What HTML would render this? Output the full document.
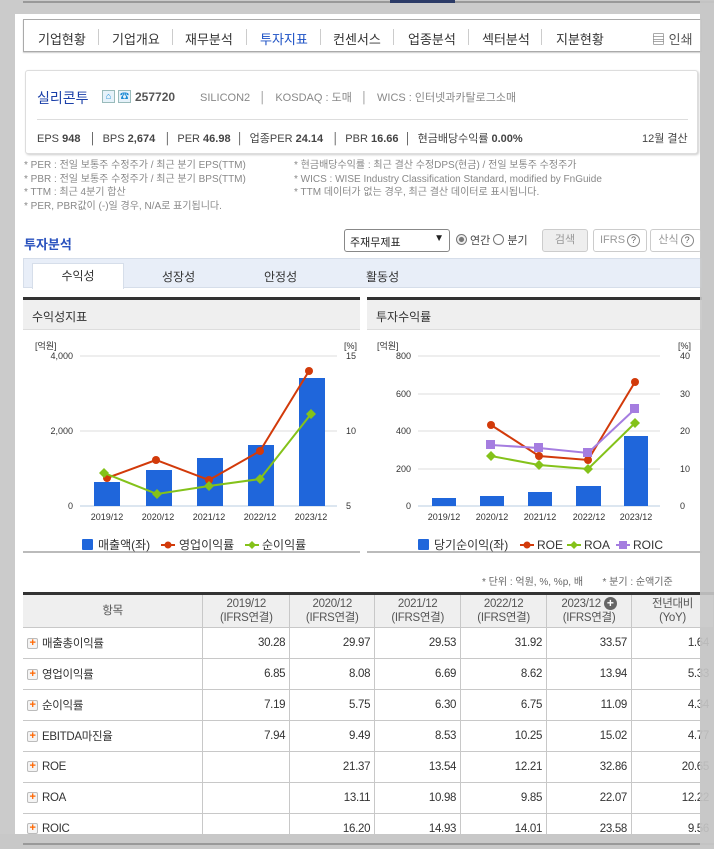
<!DOCTYPE html>
<html><head><meta charset="utf-8"><style>
*{margin:0;padding:0;box-sizing:border-box}
body{width:714px;height:849px;background:#cbcbcb;position:relative;overflow:hidden;font-family:"Liberation Sans","Noto Sans CJK KR",sans-serif;color:#333;font-size:12px}
.a{position:absolute}
.page{left:15px;top:14px;width:685px;height:820px;background:#fff}
.nav{left:23px;top:19px;width:679px;height:33px;border:1px solid #aaa;box-shadow:0 1px 1px #ccc;background:#fff}
.nav span{position:absolute;top:9px;font-size:13px;color:#333}
.nav i{position:absolute;top:9px;width:1px;height:16px;background:#ccc}
.info{left:25px;top:70px;width:673px;height:84px;border:1px solid #ddd;border-radius:3px;box-shadow:1px 1px 2px #ccc;background:#fff}
.note{font-size:10px;color:#888;line-height:13.5px}
.hd{background:#efefef;border-top:3px solid #333;border-bottom:1px solid #ddd;height:33px;font-size:12px;color:#333;padding:8px 9px}
table{border-collapse:collapse;position:absolute;left:23px;top:592px;width:691px;font-size:11.5px;letter-spacing:-0.3px}
td,th{border:1px solid #c8c8c8;height:31px;text-align:right;padding-right:4px;font-weight:normal}
thead th{background:#efefef;text-align:center;height:34px;color:#555;line-height:14px;padding:0}
tr td:first-child{text-align:left;padding-left:4px;border-left:none}
thead th:first-child{border-left:none}
table{border-top:3px solid #333}
.pl{display:inline-block;width:11px;height:11px;border:1px solid #bbb;border-radius:2px;background:#f4f4f4;color:#f60;font-size:11px;line-height:8px;text-align:center;font-weight:bold;vertical-align:middle;margin-right:4px}
.btn{position:absolute;top:229px;height:23px;border:1px solid #ccc;border-radius:3px;font-size:11px;color:#999;text-align:center;line-height:21px;background:#fff}
.q{display:inline-block;width:13px;height:13px;border:1px solid #888;border-radius:50%;font-size:9px;line-height:11px;color:#555;margin-left:2px}
</style></head><body>
<div class="a" style="left:23px;top:1px;width:691px;height:2px;background:#999"></div>
<div class="a" style="left:390px;top:0;width:65px;height:3px;background:#2b3a66"></div>
<div class="a page"></div>
<div class="a nav">
<span style="left:14px">기업현황</span><i style="left:74px"></i>
<span style="left:88px">기업개요</span><i style="left:148px"></i>
<span style="left:161px">재무분석</span><i style="left:222px"></i>
<span style="left:236px;color:#1a4fc4">투자지표</span><i style="left:296px"></i>
<span style="left:309px">컨센서스</span><i style="left:369px"></i>
<span style="left:384px">업종분석</span><i style="left:444px"></i>
<span style="left:458px">섹터분석</span><i style="left:517px"></i>
<span style="left:532px">지분현황</span>
<span style="left:628px;color:#555">▤ 인쇄</span>
</div>
<div class="a info">
<div class="a" style="left:11px;top:17px;font-size:14px;color:#1a3fa8">실리콘투</div>
<div class="a" style="left:76px;top:19px;width:13px;height:13px;border:1px solid #9bb;background:#e6f2fa;color:#1a8ad4;font-size:9px;text-align:center;line-height:11px">⌂</div>
<div class="a" style="left:92px;top:19px;width:13px;height:13px;border:1px solid #9bb;background:#e6f2fa;color:#1a8ad4;font-size:9px;text-align:center;line-height:11px">☎</div>
<div class="a" style="left:109px;top:19px;font-size:12px;font-weight:bold;color:#555">257720</div>
<div class="a" style="left:174px;top:18px;font-size:11px;color:#888">SILICON2 &nbsp;&nbsp;│&nbsp;&nbsp; KOSDAQ : 도매 &nbsp;&nbsp;│&nbsp;&nbsp; WICS : 인터넷과카탈로그소매</div>
<div class="a" style="left:11px;top:48px;width:651px;height:1px;background:#ddd"></div>
<div class="a" style="left:11px;top:59px;font-size:11px;color:#444;white-space:nowrap">EPS <b>948</b> &nbsp;&nbsp;│&nbsp; BPS <b>2,674</b> &nbsp;&nbsp;│&nbsp; PER <b>46.98</b> &nbsp;│&nbsp; 업종PER <b>24.14</b> &nbsp;&nbsp;│&nbsp; PBR <b>16.66</b> &nbsp;│&nbsp; 현금배당수익률 <b>0.00%</b></div>
<div class="a" style="left:616px;top:59px;font-size:11px;color:#444">12월 결산</div>
</div>
<div class="a note" style="left:24px;top:159px">* PER : 전일 보통주 수정주가 / 최근 분기 EPS(TTM)<br>* PBR : 전일 보통주 수정주가 / 최근 분기 BPS(TTM)<br>* TTM : 최근 4분기 합산<br>* PER, PBR값이 (-)일 경우, N/A로 표기됩니다.</div>
<div class="a note" style="left:294px;top:159px">* 현금배당수익률 : 최근 결산 수정DPS(현금) / 전일 보통주 수정주가<br>* WICS : WISE Industry Classification Standard, modified by FnGuide<br>* TTM 데이터가 없는 경우, 최근 결산 데이터로 표시됩니다.</div>
<div class="a" style="left:24px;top:234px;font-size:13px;font-weight:bold;color:#2a52be">투자분석</div>
<div class="a" style="left:344px;top:229px;width:106px;height:23px;border:1px solid #888;border-radius:3px;font-size:11px;padding:4px 5px;color:#222">주재무제표<span style="position:absolute;right:5px;top:3px;font-size:10px">▼</span></div>
<div class="a" style="left:456px;top:232px;font-size:11px;color:#444"><span style="display:inline-block;width:11px;height:11px;border:1px solid #777;border-radius:50%;background:radial-gradient(#777 35%,#eee 45%);vertical-align:-1px"></span> 연간 <span style="display:inline-block;width:11px;height:11px;border:1px solid #777;border-radius:50%;vertical-align:-1px"></span> 분기</div>
<div class="btn" style="left:542px;width:46px;background:#eee">검색</div>
<div class="btn" style="left:593px;width:54px">IFRS<span class="q">?</span></div>
<div class="btn" style="left:650px;width:52px">산식<span class="q">?</span></div>
<div class="a" style="left:23px;top:258px;width:679px;height:30px;background:#e8eef8;border:1px solid #d6deea"></div>
<div class="a" style="left:32px;top:263px;width:92px;height:26px;background:#fff;border:1px solid #d6deea;border-bottom:none;text-align:center;font-size:12px;line-height:24px">수익성</div>
<div class="a" style="left:162px;top:268px;font-size:12px">성장성</div>
<div class="a" style="left:264px;top:268px;font-size:12px">안정성</div>
<div class="a" style="left:366px;top:268px;font-size:12px">활동성</div>
<div class="a hd" style="left:23px;top:297px;width:337px">수익성지표</div>
<div class="a hd" style="left:367px;top:297px;width:335px">투자수익률</div>
<div class="a" style="left:23px;top:551px;width:337px;height:2px;background:#bbb"></div>
<div class="a" style="left:367px;top:551px;width:335px;height:2px;background:#bbb"></div>
<svg class="a" style="left:0;top:330px" width="714" height="225" font-family="Liberation Sans,Noto Sans CJK KR,sans-serif" font-size="9" fill="#333">
<g transform="translate(0,-330)">
<text x="35" y="349">[억원]</text><text x="344" y="349">[%]</text>
<g stroke="#ddd"><line x1="80" y1="356" x2="337" y2="356"/><line x1="80" y1="431" x2="337" y2="431"/></g>
<line x1="80" y1="506" x2="337" y2="506" stroke="#b8cce0"/>
<g text-anchor="end"><text x="73" y="359">4,000</text><text x="73" y="434">2,000</text><text x="73" y="509">0</text></g>
<text x="346" y="359">15</text><text x="346" y="434">10</text><text x="346" y="509">5</text>
<g fill="#1f66db"><rect x="94" y="482" width="26" height="24"/><rect x="146" y="470" width="26" height="36"/><rect x="197" y="458" width="26" height="48"/><rect x="248" y="445" width="26" height="61"/><rect x="299" y="378" width="26" height="128"/></g>
<polyline points="107,478 156,460 209,480 260,451 309,371" fill="none" stroke="#d23a0a" stroke-width="2"/>
<g fill="#d23a0a"><circle cx="107" cy="478" r="4"/><circle cx="156" cy="460" r="4"/><circle cx="209" cy="480" r="4"/><circle cx="260" cy="451" r="4"/><circle cx="309" cy="371" r="4"/></g>
<polyline points="104,473 157,494 209,486 260,479 311,414" fill="none" stroke="#84c21a" stroke-width="2"/>
<g fill="#84c21a"><path d="M104 468l5 5-5 5-5-5z"/><path d="M157 489l5 5-5 5-5-5z"/><path d="M209 481l5 5-5 5-5-5z"/><path d="M260 474l5 5-5 5-5-5z"/><path d="M311 409l5 5-5 5-5-5z"/></g>
<g text-anchor="middle"><text x="107" y="520">2019/12</text><text x="158" y="520">2020/12</text><text x="209" y="520">2021/12</text><text x="260" y="520">2022/12</text><text x="311" y="520">2023/12</text></g>
<g font-size="12"><rect x="82" y="539" width="11" height="11" fill="#1f66db" rx="1"/><text x="98" y="549">매출액(좌)</text>
<line x1="161" y1="545" x2="175" y2="545" stroke="#d23a0a" stroke-width="2"/><circle cx="168" cy="545" r="3.5" fill="#d23a0a"/><text x="179" y="549">영업이익률</text>
<line x1="245" y1="545" x2="259" y2="545" stroke="#84c21a" stroke-width="2"/><path d="M252 541l4 4-4 4-4-4z" fill="#84c21a"/><text x="262" y="549">순이익률</text></g>

<text x="377" y="349">[억원]</text><text x="678" y="349">[%]</text>
<g stroke="#ddd"><line x1="418" y1="356" x2="660" y2="356"/><line x1="418" y1="394" x2="660" y2="394"/><line x1="418" y1="431" x2="660" y2="431"/><line x1="418" y1="469" x2="660" y2="469"/></g>
<line x1="418" y1="506" x2="660" y2="506" stroke="#b8cce0"/>
<g text-anchor="end"><text x="411" y="359">800</text><text x="411" y="397">600</text><text x="411" y="434">400</text><text x="411" y="472">200</text><text x="411" y="509">0</text></g>
<text x="680" y="359">40</text><text x="680" y="397">30</text><text x="680" y="434">20</text><text x="680" y="472">10</text><text x="680" y="509">0</text>
<g fill="#1f66db"><rect x="432" y="498" width="24" height="8"/><rect x="480" y="496" width="24" height="10"/><rect x="528" y="492" width="24" height="14"/><rect x="576" y="486" width="25" height="20"/><rect x="624" y="436" width="24" height="70"/></g>
<polyline points="491,425 539,456 588,460 635,382" fill="none" stroke="#d23a0a" stroke-width="2"/>
<g fill="#d23a0a"><circle cx="491" cy="425" r="4"/><circle cx="539" cy="456" r="4"/><circle cx="588" cy="460" r="4"/><circle cx="635" cy="382" r="4"/></g>
<polyline points="491,445 539,448 588,453 635,409" fill="none" stroke="#a57de0" stroke-width="2"/>
<g fill="#a57de0"><rect x="486" y="440" width="9" height="9"/><rect x="534" y="443" width="9" height="9"/><rect x="583" y="448" width="9" height="9"/><rect x="630" y="404" width="9" height="9"/></g>
<polyline points="491,456 539,465 588,469 635,423" fill="none" stroke="#84c21a" stroke-width="2"/>
<g fill="#84c21a"><path d="M491 451l5 5-5 5-5-5z"/><path d="M539 460l5 5-5 5-5-5z"/><path d="M588 464l5 5-5 5-5-5z"/><path d="M635 418l5 5-5 5-5-5z"/></g>
<g text-anchor="middle"><text x="444" y="520">2019/12</text><text x="492" y="520">2020/12</text><text x="540" y="520">2021/12</text><text x="589" y="520">2022/12</text><text x="636" y="520">2023/12</text></g>
<g font-size="12"><rect x="418" y="539" width="11" height="11" fill="#1f66db" rx="1"/><text x="434" y="549">당기순이익(좌)</text>
<line x1="520" y1="545" x2="534" y2="545" stroke="#d23a0a" stroke-width="2"/><circle cx="527" cy="545" r="3.5" fill="#d23a0a"/><text x="537" y="549">ROE</text>
<line x1="567" y1="545" x2="581" y2="545" stroke="#84c21a" stroke-width="2"/><path d="M574 541l4 4-4 4-4-4z" fill="#84c21a"/><text x="584" y="549">ROA</text>
<line x1="616" y1="545" x2="630" y2="545" stroke="#a57de0" stroke-width="2"/><rect x="619" y="541" width="8" height="8" fill="#a57de0"/><text x="633" y="549">ROIC</text></g>
</g></svg>
<div class="a" style="left:482px;top:573px;font-size:10px;color:#666;white-space:nowrap">* 단위 : 억원, %, %p, 배 &nbsp;&nbsp;&nbsp;&nbsp;&nbsp; * 분기 : 순액기준</div>
<table>
<colgroup><col style="width:180px"><col style="width:87px"><col style="width:85px"><col style="width:86px"><col style="width:86px"><col style="width:85px"><col style="width:82px"></colgroup>
<thead><tr><th>항목</th><th>2019/12<br>(IFRS연결)</th><th>2020/12<br>(IFRS연결)</th><th>2021/12<br>(IFRS연결)</th><th>2022/12<br>(IFRS연결)</th><th>2023/12 <span style="display:inline-block;width:13px;height:13px;border-radius:50%;background:#666;color:#fff;font-size:12px;line-height:13px;font-weight:bold">+</span><br>(IFRS연결)</th><th>전년대비<br>(YoY)</th></tr></thead>
<tbody>
<tr><td><span class="pl">+</span>매출총이익률</td><td>30.28</td><td>29.97</td><td>29.53</td><td>31.92</td><td>33.57</td><td>1.64</td></tr>
<tr><td><span class="pl">+</span>영업이익률</td><td>6.85</td><td>8.08</td><td>6.69</td><td>8.62</td><td>13.94</td><td>5.33</td></tr>
<tr><td><span class="pl">+</span>순이익률</td><td>7.19</td><td>5.75</td><td>6.30</td><td>6.75</td><td>11.09</td><td>4.34</td></tr>
<tr><td><span class="pl">+</span>EBITDA마진율</td><td>7.94</td><td>9.49</td><td>8.53</td><td>10.25</td><td>15.02</td><td>4.77</td></tr>
<tr><td><span class="pl">+</span>ROE</td><td></td><td>21.37</td><td>13.54</td><td>12.21</td><td>32.86</td><td>20.65</td></tr>
<tr><td><span class="pl">+</span>ROA</td><td></td><td>13.11</td><td>10.98</td><td>9.85</td><td>22.07</td><td>12.22</td></tr>
<tr><td><span class="pl">+</span>ROIC</td><td></td><td>16.20</td><td>14.93</td><td>14.01</td><td>23.58</td><td>9.56</td></tr>
</tbody></table>
<div class="a" style="left:0;top:834px;width:714px;height:15px;background:rgba(200,200,200,0.9)"></div>
<div class="a" style="left:23px;top:843px;width:691px;height:2px;background:#999"></div>
<div class="a" style="left:700px;top:0;width:14px;height:849px;background:rgba(200,200,200,0.9)"></div>
</body></html>
